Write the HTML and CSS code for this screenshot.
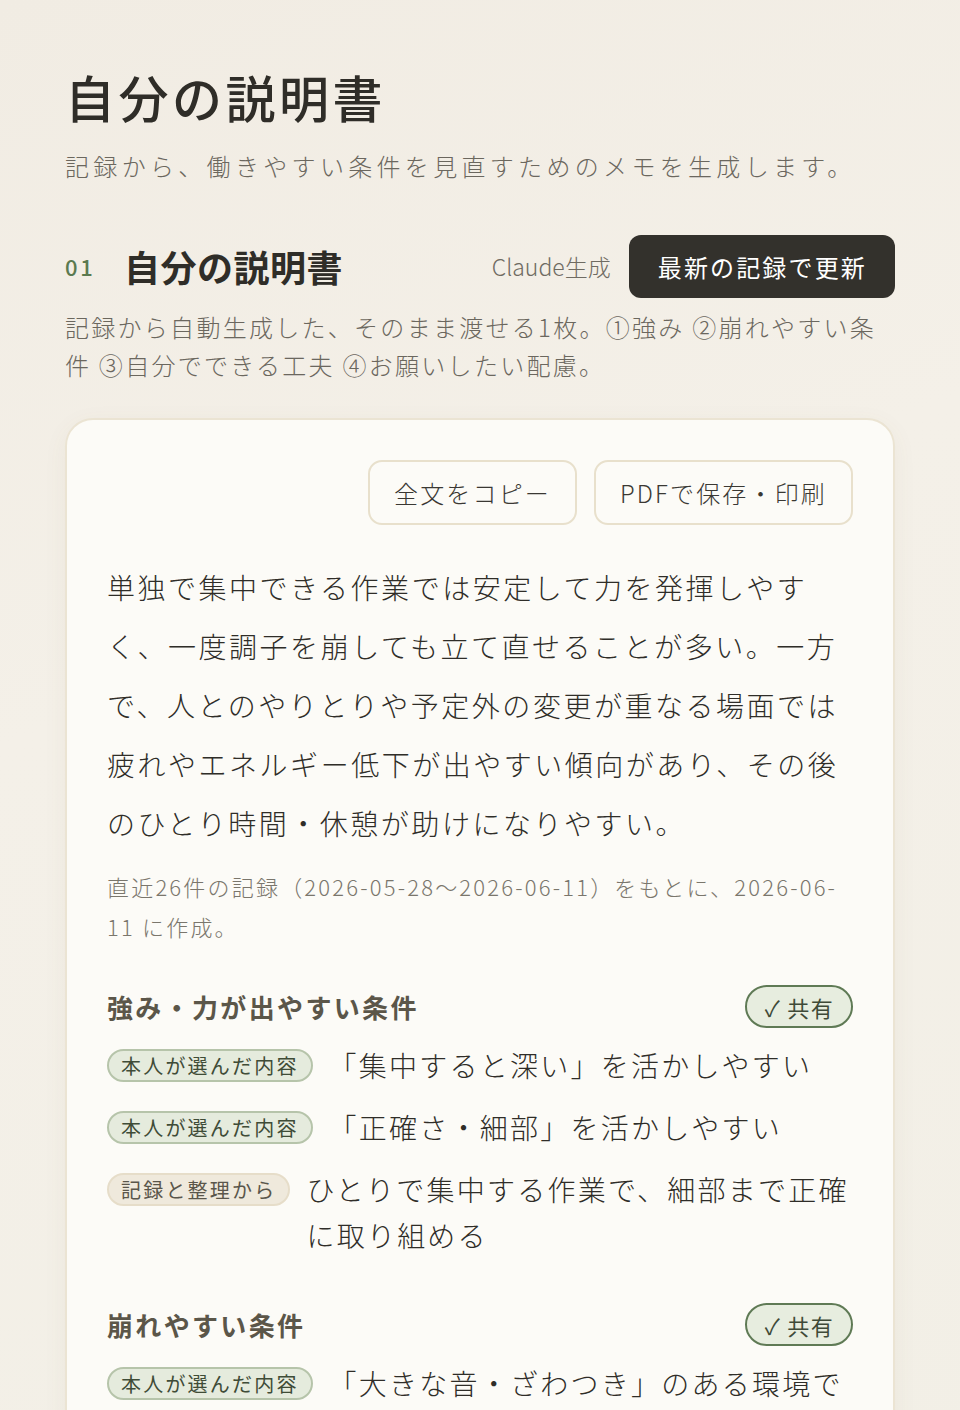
FILE: index.html
```html
<!DOCTYPE html>
<html lang="ja">
<head>
<meta charset="utf-8">
<title>自分の説明書</title>
<link rel="stylesheet" href="styles.css">
</head>
<body>
<main class="page">
  <header class="page-head">
    <h1 class="page-title">自分の説明書</h1>
    <p class="page-sub">記録から、働きやすい条件を見直すためのメモを生成します。</p>
  </header>

  <section class="section">
    <div class="section-head">
      <span class="section-num">01</span>
      <h2 class="section-title">自分の説明書</h2>
      <span class="section-meta">Claude生成</span>
      <button class="btn-dark" type="button">最新の記録で更新</button>
    </div>
    <p class="section-desc">記録から自動生成した、そのまま渡せる1枚。①強み ②崩れやすい条件 ③自分でできる工夫 ④お願いしたい配慮。</p>

    <article class="card">
      <div class="card-actions">
        <button class="btn-outline" type="button">全文をコピー</button>
        <button class="btn-outline" type="button">PDFで保存・印刷</button>
      </div>

      <p class="summary">単独で集中できる作業では安定して力を発揮しやすく、一度調子を崩しても立て直せることが多い。一方で、人とのやりとりや予定外の変更が重なる場面では疲れやエネルギー低下が出やすい傾向があり、その後のひとり時間・休憩が助けになりやすい。</p>
      <p class="summary-meta">直近26件の記録（2026-05-28〜2026-06-11）をもとに、2026-06-<wbr>11 に作成。</p>

      <div class="block">
        <div class="block-head">
          <h3 class="block-title">強み・力が出やすい条件</h3>
          <span class="pill-share">✓ 共有</span>
        </div>
        <ul class="items">
          <li class="item"><span class="tag tag-self">本人が選んだ内容</span><span class="item-text">「集中すると深い」を活かしやすい</span></li>
          <li class="item"><span class="tag tag-self">本人が選んだ内容</span><span class="item-text">「正確さ・細部」を活かしやすい</span></li>
          <li class="item"><span class="tag tag-rec">記録と整理から</span><span class="item-text">ひとりで集中する作業で、細部まで正確に取り組める</span></li>
        </ul>
      </div>

      <div class="block">
        <div class="block-head">
          <h3 class="block-title">崩れやすい条件</h3>
          <span class="pill-share">✓ 共有</span>
        </div>
        <ul class="items">
          <li class="item"><span class="tag tag-self">本人が選んだ内容</span><span class="item-text">「大きな音・ざわつき」のある環境で</span></li>
        </ul>
      </div>
    </article>
  </section>
</main>
</body>
</html>
```

FILE: styles.css
```css
* { box-sizing: border-box; }

html, body {
  margin: 0;
  padding: 0;
}

body {
  background: linear-gradient(160deg, #f1ece3 0%, #f4f0e8 40%, #f2efe6 100%);
  color: #35332e;
  font-family: "Noto Sans CJK JP", "Noto Sans", sans-serif;
  min-height: 1410px;
  overflow: hidden;
}

.page {
  width: 960px;
  padding: 58px 65px 0 65px;
}

.page-title {
  margin: 0;
  font-size: 50px;
  line-height: 76px;
  font-weight: 500;
  letter-spacing: 0.07em;
  color: #2f2d28;
}

.page-sub {
  margin: 14px 0 0 0;
  font-size: 24px;
  line-height: 36px;
  font-weight: 300;
  letter-spacing: 0.18em;
  color: #6b675e;
}

.section {
  margin-top: 50px;
}

.section-head {
  display: flex;
  align-items: center;
  height: 64px;
}

.section-num {
  font-size: 22px;
  font-weight: 500;
  letter-spacing: 0.12em;
  color: #5b7a50;
  width: 59px;
  flex: none;
}

.section-title {
  margin: 0;
  font-size: 36px;
  font-weight: 700;
  letter-spacing: 0.5px;
  color: #2f2d28;
  flex: 1;
}

.section-meta {
  font-size: 23px;
  font-weight: 300;
  color: #6f6b62;
  margin-right: 18px;
}

.btn-dark {
  font-family: inherit;
  background: #33312c;
  color: #ffffff;
  border: none;
  border-radius: 12px;
  height: 63px;
  padding: 0 28px 0 29px;
  font-size: 24px;
  font-weight: 400;
  letter-spacing: 0.09em;
}

.section-desc {
  margin: 10px 0 0 0;
  width: 828px;
  font-size: 24px;
  line-height: 38px;
  font-weight: 300;
  letter-spacing: 0.095em;
  color: #6b675e;
}

.card {
  margin-top: 34px;
  background: #fcfbf7;
  border: 2px solid #ebe4d3;
  border-radius: 28px;
  padding: 40px 40px 40px 40px;
  box-shadow: 0 6px 24px rgba(120, 100, 60, 0.06);
  min-height: 1100px;
}

.card-actions {
  display: flex;
  justify-content: flex-end;
  gap: 17px;
}

.btn-outline {
  font-family: inherit;
  background: #fcfbf7;
  color: #3a3833;
  border: 2px solid #e8e0cc;
  border-radius: 14px;
  height: 65px;
  padding: 0 24px;
  font-size: 24px;
  font-weight: 300;
  letter-spacing: 0.09em;
}

.summary {
  margin: 33px 0 0 0;
  font-size: 28px;
  line-height: 59px;
  font-weight: 300;
  letter-spacing: 0.09em;
  color: #2f2d28;
}

.summary-meta {
  margin: 13px 0 0 0;
  font-size: 22px;
  line-height: 40px;
  font-weight: 300;
  letter-spacing: 0.1em;
  color: #7a766c;
}

.block {
  margin-top: 39px;
}

.block + .block {
  margin-top: 45px;
}

.block-head {
  display: flex;
  align-items: center;
  justify-content: space-between;
}

.block-title {
  margin: 0;
  font-size: 26px;
  font-weight: 700;
  letter-spacing: 0.09em;
  color: #5b5649;
}

.pill-share {
  display: inline-flex;
  align-items: center;
  height: 43px;
  padding: 0 17px 0 18px;
  border: 2px solid #5f7a55;
  border-radius: 22px;
  background: #e7eddf;
  color: #3f4a38;
  font-size: 22px;
  font-weight: 400;
  letter-spacing: 0.06em;
}

.items {
  list-style: none;
  margin: 14px 0 0 0;
  padding: 0;
  display: flex;
  flex-direction: column;
  gap: 16px;
}

.item {
  display: flex;
  align-items: flex-start;
}

.tag {
  flex: none;
  display: inline-flex;
  align-items: center;
  height: 33px;
  margin-top: 7px;
  margin-right: 16px;
  padding: 0 12px;
  border-radius: 17px;
  font-size: 20px;
  font-weight: 400;
  letter-spacing: 0.11em;
}

.tag-self {
  background: #e5ebdd;
  border: 2px solid #b6c4aa;
  color: #3f4c37;
}

.tag-rec {
  background: #efe9dc;
  border: 2px solid #e6ddc9;
  color: #5a564b;
}

.item-text {
  font-size: 28px;
  line-height: 46px;
  font-weight: 300;
  letter-spacing: 0.08em;
  color: #2f2d28;
}
```
